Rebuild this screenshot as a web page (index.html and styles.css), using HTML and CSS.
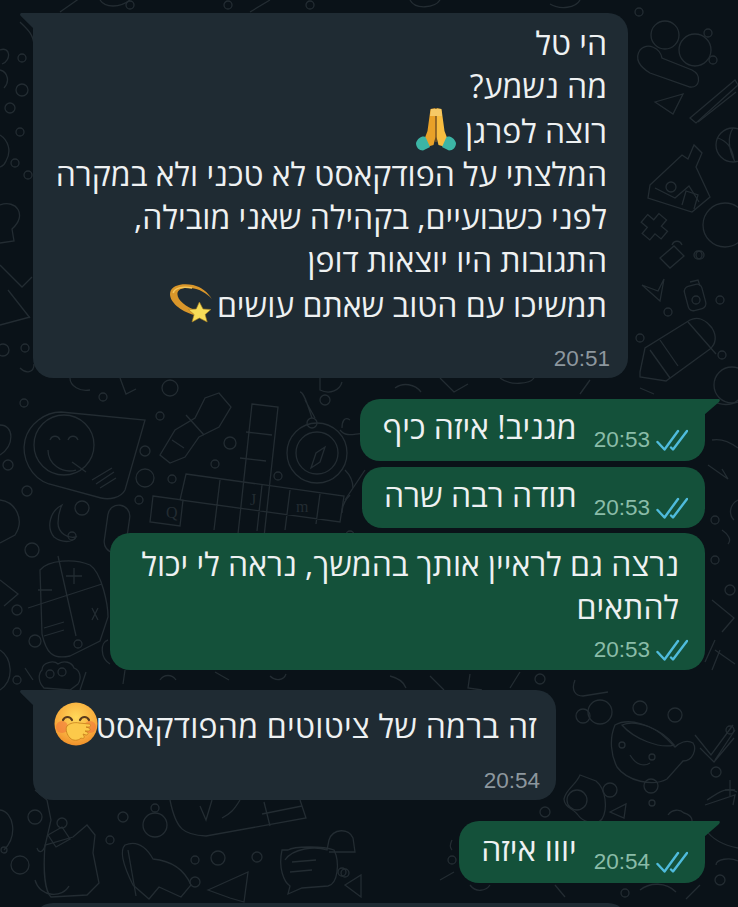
FILE: index.html
```html
<!DOCTYPE html>
<html lang="he">
<head>
<meta charset="utf-8">
<title>צ'אט</title>
<link rel="stylesheet" href="styles.css">
</head>
<body>
<svg class="doodles" width="738" height="907" viewBox="0 0 738 907" fill="none" stroke="#232c32" stroke-width="1.300" aria-hidden="true">
  <!-- right column top -->
  <circle cx="665" cy="35" r="14"/><circle cx="695" cy="50" r="16"/><path d="M640 50c8-8 20-2 22 8l30 12c10 5 8 18-2 17l-40-14c-10-6-16-14-10-23z"/>
  <circle cx="639" cy="12" r="4"/><circle cx="708" cy="33" r="4"/><circle cx="713" cy="60" r="4"/>
  <path d="M655 102l28-8-10 20z"/><path d="M690 118l45-38 3 5-42 38z"/><path d="M698 122l38-30"/>
  <circle cx="733" cy="145" r="17"/><path d="M718 138c8 3 14 8 16 22M733 128c-5 8-5 20 2 34"/>
  <path d="M650 185l32-30 6 4 6-14 8 8-6 14 14 30-18 15-44-14z"/><path d="M655 188l20 10 14-12 10 16"/><circle cx="671" cy="187" r="5"/><path d="M682 205l4-14 12 4-4 14"/>
  <path d="M642 222h8v-8h10v8h8v10h-8v8h-10v-8h-8z" transform="rotate(40 655 226)"/>
  <circle cx="725" cy="225" r="22"/><circle cx="700" cy="255" r="4"/><circle cx="696" cy="300" r="4"/>
  <path d="M660 258l14-12 10 10-14 12z"/><path d="M672 245c2-5 8-5 10 0"/><circle cx="698" cy="255" r="4"/>
  <rect x="686" y="285" width="18" height="25" rx="5" transform="rotate(-15 695 297)"/><path d="M690 282l8-2 2 6"/>
  <path d="M642 285l16 6 6-12-4 22z"/><circle cx="668" cy="312" r="4"/><circle cx="720" cy="300" r="4"/>
  <path d="M640 372l5-24 45-28c8-4 16 0 22 8 5 8 4 16-2 21l-44 32-26-4z"/><path d="M688 322l28 32M650 350l20 28M660 340l18 26"/><circle cx="640" cy="338" r="4"/>
  <circle cx="722" cy="355" r="4"/><circle cx="732" cy="385" r="18"/>
  <!-- left strip -->
  <path d="M20 22c6 6 14 12 14 24"/><circle cx="22" cy="58" r="4"/><path d="M0 50c10-4 12 10 2 14"/><circle cx="10" cy="108" r="5"/><circle cx="20" cy="132" r="4"/>
  <path d="M0 70c8 2 10 12 4 18"/><circle cx="22" cy="90" r="6"/><path d="M0 135c8 5 12 16 6 26-2 5-4 5-6 6"/><circle cx="15" cy="163" r="4"/><circle cx="28" cy="175" r="4"/>
  <path d="M0 205c16-6 28 10 12 24l2 12-14 2"/><path d="M0 265l22 22 10-10"/><path d="M8 290l22 28"/><path d="M0 325l30-8"/><circle cx="25" cy="348" r="4"/><circle cx="3" cy="350" r="6"/><path d="M20 368c6 6 14 5 14-4"/>
  <!-- top strip -->
  <circle cx="130" cy="5" r="4"/><circle cx="228" cy="5" r="4"/><circle cx="310" cy="5" r="4"/><path d="M60 12l20-14M270 0l-20 12M100 0c5 8 20 8 30 0M440 0c-5 8-25 10-30 0M580 0c-4 8-20 10-30 4"/>
  <!-- between 1 and 2 -->
  <circle cx="170" cy="388" r="8"/><path d="M120 378l6 16 10-5M70 378c0 8 10 14 20 12M320 378l0 12c10 5 20 0 22-8M440 378l14 14 14-8M500 378c10 8 30 6 34 0"/>
  <!-- smile cup -->
  <path d="M145 420l-20 70c-4 8-16 10-24 8l-52-14c-18-6-28-26-24-44 4-16 20-28 36-28z"/>
  <circle cx="64" cy="445" r="30"/><path d="M48 450c0 14 14 24 28 20"/><path d="M50 440c2-5 8-5 10 0M68 440c2-5 8-5 10 0"/><path d="M72 462l14 10"/><path d="M92 480l20-12M96 484l18-12M100 488l16-10"/>
  <circle cx="24" cy="403" r="4"/><circle cx="103" cy="397" r="4"/><circle cx="160" cy="416" r="4"/><circle cx="8" cy="465" r="5"/><circle cx="27" cy="491" r="5"/>
  <path d="M0 425c14 0 15 20 0 30"/><path d="M0 500c16 2 25 20 15 35l-15 8"/>
  <path d="M62 505c-12 6-16 22-8 32 8 6 18 6 22 0-8 2-18-4-18-14 0-8 2-14 4-18z"/><circle cx="82" cy="508" r="7"/><circle cx="72" cy="536" r="4"/><circle cx="32" cy="550" r="7"/>
  <rect x="106" y="505" width="22" height="48" rx="11" transform="rotate(8 117 529)"/>
  <circle cx="145" cy="478" r="9"/><circle cx="145" cy="451" r="5"/><circle cx="172" cy="479" r="4"/><circle cx="139" cy="500" r="4"/>
  <path d="M160 455l15-25 20-12 10-20 14-5 12 14-12 20-20 10-14 20-15 6z" /><path d="M186 415l18 20M172 440l12 8"/>
  <circle cx="230" cy="443" r="6"/><circle cx="215" cy="464" r="4"/><circle cx="278" cy="476" r="4"/>
  <!-- crossword -->
  <path d="M252 404l26 3-14 130-26-3zM246 432l26 3M240 458l26 3"/>
  <path d="M186 474l158 22-4 26-160-22zM153 496l30 4-3 26-30-4zM220 480l-6 50M262 485l-5 46M290 490l-5 40M320 494l-4 30"/>
  <text class="cw" x="166" y="518">Q</text><text class="cw" x="250" y="505">J</text><text class="cw" x="296" y="512">m</text>
  <!-- compass -->
  <circle cx="317" cy="453" r="30"/><circle cx="317" cy="453" r="21"/><path d="M325 447l-5 15-9 6 5-15z"/><circle cx="312" cy="423" r="5"/><path d="M300 392c4 0 8 14 12 26M305 400l10 18"/>
  <circle cx="325" cy="400" r="5"/><path d="M340 430c8 10 20 0 26 5M345 500l20-30"/>
  <!-- left column calculator -->
  <path d="M40 570c8-10 34-12 50-5 12 8 18 40 18 52l-8 24-30 15c-18 4-24-4-28-22z"/><path d="M58 556l18 80M28 608l74-24"/><path d="M66 576h16M74 568v16M92 608l6 12M98 608l-6 12M38 590h14M44 628l20-6M44 636l20-6"/>
  <circle cx="17" cy="610" r="5"/><circle cx="17" cy="632" r="4"/><circle cx="35" cy="641" r="6"/><circle cx="78" cy="644" r="4"/><path d="M0 580l18 14-14 12"/><path d="M0 650c12 8 15 30 0 40"/>
  <path d="M42 670c0-8 12-10 16-6 6-4 14-2 16 4 6 2 8 10 4 16l-8 6-26-2c-6-6-6-14-2-18z"/><circle cx="50" cy="674" r="4"/><circle cx="62" cy="672" r="4"/>
  <circle cx="17" cy="680" r="4"/><path d="M108 640c-8 2-8 18 2 24M25 668l8 12"/>
  <path d="M125 670l-2 14M160 680c4-6 12-6 16 0M215 672l14 8M270 676c6 6 14 4 16-2"/><path d="M430 676l14 14M470 674l-2 14 14 2M520 672l-10 16"/>
  <!-- bottom left -->
  <path d="M35 790l12 10 4 20-6 26c-2 6-6 8-8 2"/><path d="M0 810c14 2 18 26 4 40"/><circle cx="35" cy="817" r="7"/><circle cx="62" cy="823" r="5"/><circle cx="20" cy="865" r="9"/><circle cx="4" cy="850" r="3"/>
  <path d="M45 845l28-8 14-12 8 10-2 18 6 30-12 12-36 2c-6-6-8-26-6-52z"/><path d="M48 835l14-8 8 12-14 8z"/><path d="M35 880c5 18 28 18 34 6"/>
  <circle cx="123" cy="817" r="5"/><circle cx="110" cy="840" r="4"/><circle cx="155" cy="825" r="12"/><circle cx="155" cy="808" r="4"/><circle cx="257" cy="857" r="5"/><circle cx="195" cy="882" r="5"/><circle cx="218" cy="858" r="7"/><circle cx="195" cy="860" r="4"/><circle cx="345" cy="873" r="4"/>
  <path d="M125 845c10-4 20 0 28 14 20 2 32 12 38 26l-10 12-22-10-10 12-16-14c-10-20-14-34-8-40z"/><path d="M128 850l8 46"/>
  <path d="M208 890l40-18-4 30-14-4z"/>
  <path d="M170 800c6 30 14 35 36 36l100-18-6-18"/><path d="M264 802l6 24M262 814l40-8"/><path d="M200 806l6 14 6-20M240 800c-6 10-10 14-18 18"/>
  <path d="M285 860c8-12 30-14 42-10l2-10c4-12 20-12 24-2l2 14 -26 0M282 850c-4 18 2 32 8 36l-2 8 14-6 26-2c10-2 12-24 6-36-10-4-40-4-46 0z"/><path d="M292 862l24-2M290 872l22-2"/><circle cx="342" cy="872" r="4"/>
  <path d="M345 885l16-10 0 22z"/>
  <!-- middle and right -->
  <circle cx="540" cy="679" r="5"/><path d="M575 680c-4 10 0 16 8 16l25-4"/><path d="M715 640l-10 22M720 650l-8 20"/><circle cx="640" cy="708" r="7"/><circle cx="675" cy="715" r="7"/><circle cx="583" cy="716" r="7"/><circle cx="600" cy="712" r="12"/>
  <path d="M615 725c-6 14-4 30 2 42 10 14 36 20 50 12l16-18c10 0 14-12 10-18-6-4-14 0-18 4l-8-8c-14-14-38-22-52-14z"/><path d="M622 725c14-6 40 4 52 20-14 4-40-6-52-20z"/><circle cx="622" cy="745" r="3"/><circle cx="652" cy="757" r="3"/><path d="M630 755c6 10 14 12 20 8"/>
  <path d="M695 735l16 20 22-30M700 748l14 14 20-24M715 760l20-30"/><circle cx="716" cy="772" r="5"/><circle cx="730" cy="730" r="4"/>
  <path d="M580 775c-4 10-14 14-16 24 0 8 10 10 14 16 4 6 18 12 24 4 6-10 4-30-6-38z"/><circle cx="577" cy="800" r="10"/><circle cx="610" cy="790" r="7"/><circle cx="651" cy="786" r="7"/><circle cx="652" cy="803" r="3"/><circle cx="545" cy="812" r="5"/>
  <path d="M610 812l16-8-2 14z"/><path d="M705 805l30-10-2 10M707 800c12-8 20-14 30-8"/><path d="M668 815c4-6 12-6 16-2 8 2 10 8 6 12"/>
  <path d="M716 865c0-6 14-8 22-4"/><circle cx="720" cy="880" r="5"/><path d="M706 830c4 6 12 14 32 18"/>
  <path d="M730 780v16M725 790h10"/>
  <path d="M452 840c-2 4-2 8 0 10"/><circle cx="452" cy="860" r="4"/><path d="M440 880l14-8"/>
  <path d="M470 885c6 8 16 6 20 0M555 885l10 12M640 890c10-8 26-8 36 2M700 885l-14 14"/><circle cx="625" cy="893" r="4"/>
  <path d="M712 400c8 6 20 6 26 0M712 440c10-2 18 2 26 8M708 465l20 14-6-10M738 500c-8 4-10 14-4 20M722 530c6 4 10 10 6 14"/><circle cx="715" cy="520" r="4"/><circle cx="730" cy="590" r="5"/><circle cx="715" cy="560" r="4"/><path d="M712 600l22 18-12 14M715 650l20 14"/>
  <path d="M350 420c-6-4-8 2-8 8"/><path d="M345 470c4 4 8 10 8 18M350 495c-4 4-8 10-8 18"/><circle cx="350" cy="535" r="4"/>
  <path d="M86 672l-6 18M590 380l-10 14M395 388c8-6 20-4 26 4M640 388l14 6"/><path d="M390 676c8 2 14 6 16 12M560 840l14 8"/>
</svg>

<main class="chat" dir="rtl">
  <div class="bubble in first">
    <svg class="tail" width="14" height="16" viewBox="0 0 14 16"><path d="M14 0H2C0 0-.5 1.500.8 3L14 16z"/></svg>
    <p class="text">הי טל<br>מה נשמע?<br>רוצה לפרגן <svg class="emoji pray" width="40" height="44" viewBox="0 0 40 44"><path d="M19.500 1l-5 1-3 22-3 8 2 8 7-2 2-8z" fill="#e9a128"/><path d="M20.500 1l5 1 3 22 3 8-2 8-7-2-2-8z" fill="#f8bd40"/><path d="M20 3v32" stroke="#a8691a" stroke-width="1" fill="none"/><path d="M15 2h10l1 7H14z" fill="#f6c966"/><path d="M0 36c2-6 8-8 10-5l4 9-7 3.500c-4 0-7-3-7-7.500zM40 36c-2-6-8-8-10-5l-4 9 7 3.500c4 0 7-3 7-7.500z" fill="#3cb5a5"/></svg><br>המלצתי על הפודקאסט לא טכני ולא במקרה<br>לפני כשבועיים, בקהילה שאני מובילה,<br>התגובות היו יוצאות דופן<br>תמשיכו עם הטוב שאתם עושים<svg class="emoji dizzy" width="46" height="44" viewBox="0 0 44 44" preserveAspectRatio="none"><path d="M25 34C12 30 1 21 2 12 3 4 14 2 24 4c8 2 14 7 18 14-5-6-12-10-20-11C15 6 9 8 9 13c0 6 8 13 19 17z" fill="#d9962a"/><path d="M5 12c1-5 9-7 18-5" stroke="#f4c65a" stroke-width="1.500" fill="none"/><path d="M30 21l3.500 7 7.500.5-5.500 5 2 7.500-7.500-4-7 4 2-7.500-5.500-5 7.500-.5z" fill="#f6dc58" stroke="#a97f20" stroke-width=".6"/></svg></p>
    <div class="meta"><time class="time">20:51</time></div>
  </div>

  <div class="bubble out two">
    <svg class="tail" width="16" height="16" viewBox="0 0 16 16"><path d="M0 0h14c2 0 2.500 1 1 3L0 16z"/></svg>
    <div class="inline">
      <p class="text" dir="rtl">מגניב! איזה כיף</p>
      <div class="meta"><time class="time">20:53</time><svg class="ticks" width="32" height="24" viewBox="0 0 32 24"><path d="M1.500 14l7 7.500L22 3M15 19.500l2 2L31 3"/></svg></div>
    </div>
  </div>

  <div class="bubble out three">
    <div class="inline">
      <p class="text" dir="rtl">תודה רבה שרה</p>
      <div class="meta"><time class="time">20:53</time><svg class="ticks" width="32" height="24" viewBox="0 0 32 24"><path d="M1.500 14l7 7.500L22 3M15 19.500l2 2L31 3"/></svg></div>
    </div>
  </div>

  <div class="bubble out four">
    <p class="text">נרצה גם לראיין אותך בהמשך, נראה לי יכול<br>להתאים</p>
    <div class="meta"><time class="time">20:53</time><svg class="ticks" width="32" height="24" viewBox="0 0 32 24"><path d="M1.500 14l7 7.500L22 3M15 19.500l2 2L31 3"/></svg></div>
  </div>

  <div class="bubble in five">
    <svg class="tail" width="14" height="16" viewBox="0 0 14 16"><path d="M14 0H2C0 0-.5 1.500.8 3L14 16z"/></svg>
    <p class="text">זה ברמה של ציטוטים מהפודקאסט<svg class="emoji hush" width="44" height="44" viewBox="0 0 44 44"><defs><radialGradient id="hushface" cx=".5" cy=".35" r=".7"><stop offset="0" stop-color="#ffd95a"/><stop offset=".7" stop-color="#f7a83a"/><stop offset="1" stop-color="#ee8a26"/></radialGradient></defs><circle cx="22" cy="22" r="21.500" fill="url(#hushface)"/><circle cx="8" cy="25" r="6" fill="#ef6a3a" opacity=".5"/><circle cx="36" cy="25" r="6" fill="#ef6a3a" opacity=".5"/><path d="M9 18c2-4 7-4 9 0M26 18c2-4 7-4 9 0" stroke="#5a3a1c" stroke-width="2.200" stroke-linecap="round" fill="none"/><path d="M13 24c3-3 8-4 12-3l10 1c2 0 2 3 0 3l-3 0 3 1c2 1 1 3-1 3l-3 0 2 1c2 1 1 3-1 3l-3-1 1 2c1 2-1 3-3 2-3 3-8 3-11 0-3-3-5-9-3-12z" fill="#fcc94a" stroke="#c67f1a" stroke-width=".8"/></svg></p>
    <div class="meta"><time class="time">20:54</time></div>
  </div>

  <div class="bubble out six">
    <svg class="tail" width="16" height="16" viewBox="0 0 16 16"><path d="M0 0h14c2 0 2.500 1 1 3L0 16z"/></svg>
    <div class="inline">
      <p class="text" dir="rtl">יווו איזה</p>
      <div class="meta"><time class="time">20:54</time><svg class="ticks" width="32" height="24" viewBox="0 0 32 24"><path d="M1.500 14l7 7.500L22 3M15 19.500l2 2L31 3"/></svg></div>
    </div>
  </div>

  <div class="bubble in peek"></div>
</main>
</body>
</html>
```

FILE: styles.css
```css
* { box-sizing: border-box; }
html, body { margin: 0; height: 100%; }
body {
  position: relative;
  width: 738px;
  height: 907px;
  overflow: hidden;
  background: #0a1218;
  font-family: "Open Sans", "Liberation Sans", "Noto Sans", sans-serif;
}
.doodles { position: absolute; inset: 0; }
.cw { font: 16px "Liberation Serif", serif; fill: #232c32; stroke: none; }
.chat {
  position: relative;
  display: flex;
  flex-direction: column;
  padding: 13px 33px 0;
}
.bubble {
  position: relative;
  border-radius: 20px;
  color: #eef1f2;
}
.in { background: #1f2b33; align-self: flex-end; }
.out { background: #14513a; align-self: flex-start; }
.tail { position: absolute; top: 0; }
.in .tail { right: 100%; fill: #1f2b33; margin-right: -1px; }
.out .tail { left: 100%; fill: #14513a; margin-left: -1px; }
.in.first, .in.five { border-top-left-radius: 0; }
.out.two, .out.six { border-top-right-radius: 0; }
.text {
  margin: 0;
  font-size: 32px;
  line-height: 43px;
  white-space: nowrap;
}
.emoji { vertical-align: -8px; }
.pray { margin-right: 1px; }
.dizzy { margin-right: 3px; }
.hush { margin-right: -2px; }
.meta {
  display: flex;
  align-items: center;
  direction: ltr;
  justify-content: flex-end;
  gap: 6px;
  height: 24px;
}
.time { font: 22.500px/24px "Liberation Sans", Arimo, sans-serif; }
.in .time { color: #8d979e; }
.out .time { color: #8abcA8; }
.ticks { fill: none; stroke: #4fbbdc; stroke-width: 2.400; stroke-linecap: round; stroke-linejoin: round; }

.first { width: 595px; height: 365px; padding: 8px 21px 0 21px; }
.first .meta { margin-top: 21px; margin-right: -3px; }
.two, .three, .six { height: 62px; padding: 0 17px 0 15px; }
.two { width: 345px; margin-top: 21px; }
.three { width: 343px; margin-top: 6px; height: 61px; }
.four { width: 595px; height: 137px; margin-top: 5px; padding: 9px 26px 0 17px; }
.four .meta { margin-top: 10px; margin-right: -9px; }
.five { width: 523px; height: 110px; margin-top: 20px; padding: 12px 19px 0 19px; }
.five .text { letter-spacing: .25px; }
.five .meta { margin-top: 22px; margin-right: -3px; }
.six { width: 246px; margin-top: 21px; }
.peek { width: 595px; height: 40px; margin-top: 20px; }
.inline {
  display: flex;
  direction: ltr;
  align-items: center;
  justify-content: flex-end;
  height: 100%;
  gap: 17px;
}
.inline .text { margin-top: -7px; }
.inline .meta { margin-top: 20px; }
```
